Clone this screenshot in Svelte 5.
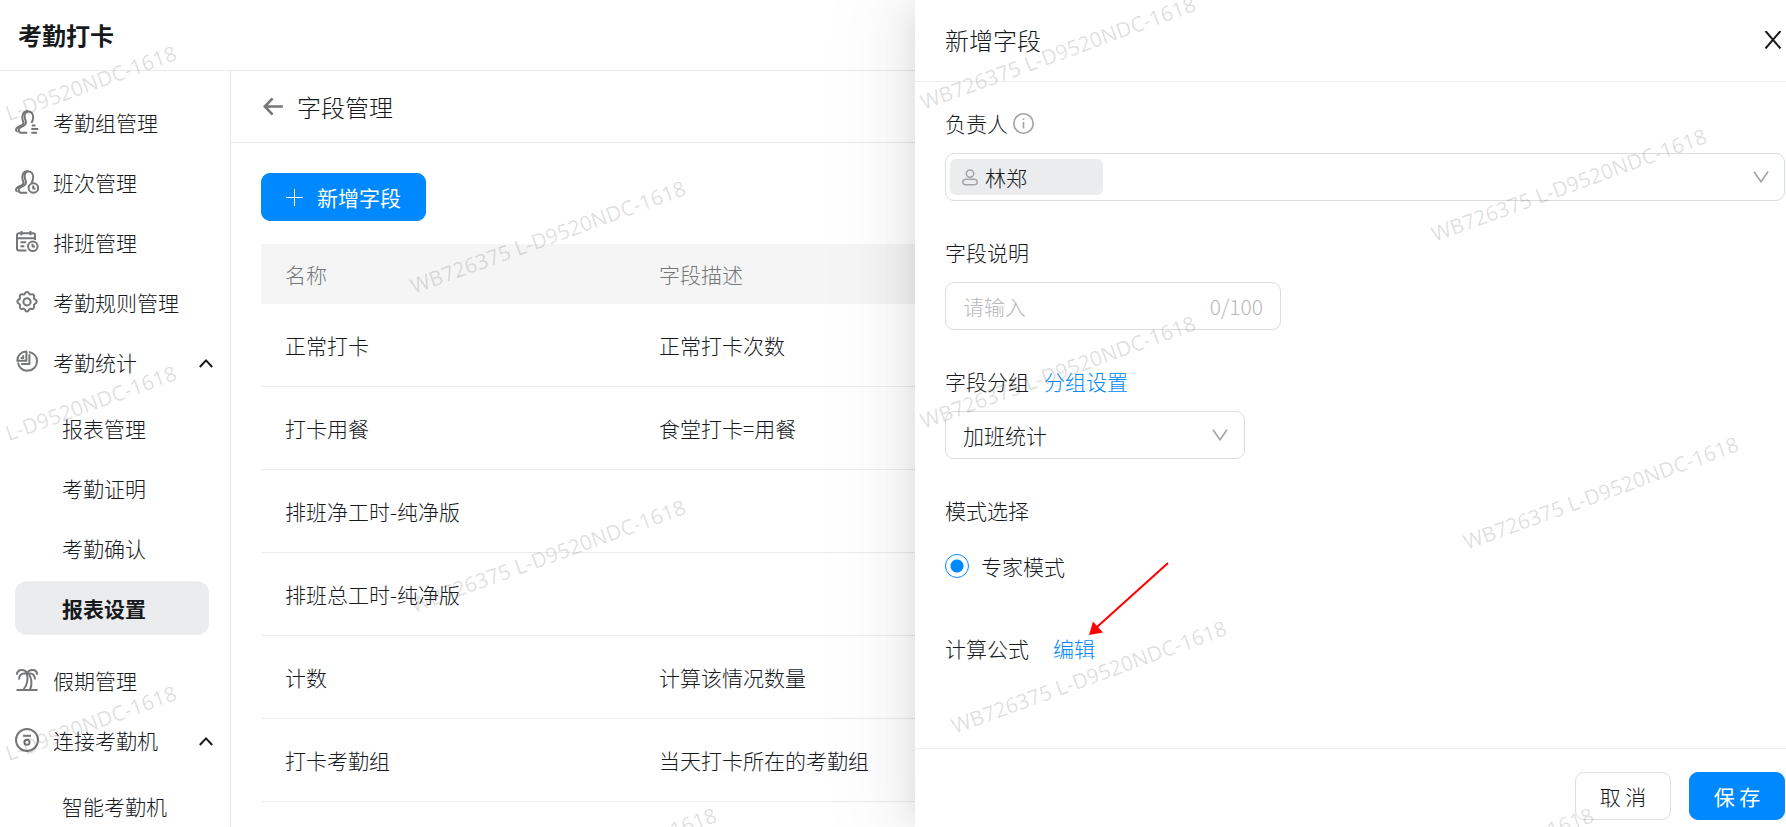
<script>
  const menu = [
    { icon: 'group', label: '考勤组管理' },
    { icon: 'shift', label: '班次管理' },
    { icon: 'calendar', label: '排班管理' },
    { icon: 'gear', label: '考勤规则管理' },
    { icon: 'pie', label: '考勤统计', children: ['报表管理', '考勤证明', '考勤确认', '报表设置'] },
    { icon: 'palm', label: '假期管理' },
    { icon: 'device', label: '连接考勤机', children: ['智能考勤机'] },
  ];
  const active = '报表设置';

  const rows = [
    ['正常打卡', '正常打卡次数'],
    ['打卡用餐', '食堂打卡=用餐'],
    ['排班净工时-纯净版', ''],
    ['排班总工时-纯净版', ''],
    ['计数', '计算该情况数量'],
    ['打卡考勤组', '当天打卡所在的考勤组'],
    ['', ''],
  ];

  // Right-hand end of every watermark line
  const device = 'L-D9520NDC-1618';
  const full = 'WB726375 ' + device;
  const marks = [
    [170, 54, device], [170, 374, device], [170, 694, device],
    [679, 189, full], [679, 508, full], [710, 816, full],
    [1189, 5, full], [1189, 324, full], [1220, 629, full],
    [1700, 137, full], [1732, 445, full], [1587, 816, full],
  ];

  let description = $state('');
</script>

{#snippet icon(name)}
  <svg class="icon" viewBox="0 0 24 24" aria-hidden="true">
    {#if name === 'group' || name === 'shift'}
      <path d="M12.600 1.200C9.800 1.200 7.900 3 7.500 5.600c-.4 2.200 0 4.600 1 6.700.3 1.300-.4 2.200-1.600 2.800L3.200 17c-1.700.9-2.400 1.900-2.200 3.200.1.700.8 1.200 1.600 1.200" />
      <path d="M12.600 1.200c3.500 0 5.700 2.600 5.600 6 0 2.600-.8 4.200-1.900 5.600M12.800 1.200c-2.600.8-3.400 3.400-3.100 6 .2 1.800.9 3 1.200 4.500.4 2-.8 3.200-2.400 4.100l-3 1.600c-1.200.7-1.800 1.400-1.800 2.600 0 1.700.9 2.700 2.500 2.700h6" />
      {#if name === 'group'}
        <path d="M16.800 15.400h3.700M16.300 19h7M16.300 22.700h5.700" />
      {:else}
        <circle cx="18.400" cy="18" r="4.800" />
        <path d="M18.200 15.500v2.900h2.300" />
      {/if}
    {:else if name === 'calendar'}
      <path d="M11.500 20.500H4a2 2 0 0 1-2-2V5.200a2 2 0 0 1 2-2h14a2 2 0 0 1 2 2V10M2 8.300h18M6.500 1v4.200M15.500 1v4.200M5.500 12.300h5.600M5.500 16.300h3.800" />
      <circle cx="17.800" cy="16.300" r="4.800" />
      <path d="M17.500 13.700v2.900h2.500" />
    {:else if name === 'gear'}
      <path d="M12 2.100c1.100 0 1.700.5 2.100 1.500.3.800.9 1.100 1.800.8 1.100-.4 2-.3 2.700.4.700.7.800 1.600.4 2.700-.3.900 0 1.500.8 1.800 1 .4 1.900 1.200 1.900 2.300s-.9 1.900-1.900 2.300c-.8.300-1.100.9-.8 1.800.4 1.100.3 2-.4 2.700-.7.700-1.600.8-2.700.4-.9-.3-1.500 0-1.800.8-.4 1-1 2-2.100 2s-1.700-1-2.100-2c-.3-.8-.9-1.100-1.800-.8-1.100.4-2 .3-2.700-.4-.7-.7-.8-1.600-.4-2.700.3-.9 0-1.500-.8-1.800-1-.4-1.900-1.200-1.900-2.300s.9-1.900 1.900-2.300c.8-.3 1.100-.9.8-1.800-.4-1.100-.3-2 .4-2.700.7-.7 1.600-.8 2.700-.4.900.3 1.500 0 1.800-.8.400-1 1-1.500 2.100-1.500z" />
      <circle cx="12" cy="11.800" r="3.600" />
    {:else if name === 'pie'}
      <path d="M14 2.100c4.700.9 8 4.500 8 9.200a9.500 9.500 0 0 1-9.500 9.500c-5.200 0-9-3.600-9.500-8.300" />
      <path d="M11.400 1.500v9.200H2.300c0-5.200 3.900-9.200 9.100-9.200zM14.400 4.300V14H6.200" />
      <path d="M8.200 5.200v2.700H5.700" />
    {:else if name === 'palm'}
      <path d="M1.800 6.800C1.900 3.800 4 2 6.800 2c2.500 0 4.500 1.200 5.300 3.300C12.900 3.200 15 2 17.400 2c2.800 0 4.800 1.800 4.900 4.800M4.200 11.500c-.5-3.300 1.600-6 5-6h5.600c3.600 0 5.600 2.700 5 6M1.500 22h21" />
      <path d="M11.800 5.500c1.500 5.500.8 11-3.500 16.300M13.800 6c3.200 4.700 3.300 10.500 1.200 15.800" />
    {:else if name === 'device'}
      <circle cx="12" cy="12" r="11" />
      <path d="M8 7.800h8" />
      <circle cx="12" cy="14.200" r="2.500" />
    {/if}
  </svg>
{/snippet}

{#snippet arrowDown()}
  <svg class="down" viewBox="0 0 16 12" aria-hidden="true"><path d="M1 .8l7 10 7-10" /></svg>
{/snippet}

<div class="page">
  <header class="top"><h1>考勤打卡</h1></header>

  <div class="layout">
    <nav class="side">
      {#each menu as item}
        <a class="item" href="#menu">
          {@render icon(item.icon)}
          <span>{item.label}</span>
          {#if item.children}
            <svg class="up" viewBox="0 0 14 12" aria-hidden="true"><path d="M.8 11L7 4.400l6.200 6.600" /></svg>
          {/if}
        </a>
        {#if item.children}
          <div class="sub">
            {#each item.children as child}
              <a class="item child" class:active={child === active} href="#menu">{child}</a>
            {/each}
          </div>
        {/if}
      {/each}
    </nav>

    <main>
      <div class="crumb">
        <button class="plain" aria-label="返回">
          <svg class="back" viewBox="0 0 20 20" aria-hidden="true"><path d="M9.600 1.300L1.800 9.500l7.800 8.200M2 9.500h17.800" /></svg>
        </button>
        <h2>字段管理</h2>
      </div>
      <div class="content">
        <button class="btn primary add">
          <svg class="plus" viewBox="0 0 17 17" aria-hidden="true"><path d="M8.500 0v17M0 8.500h17" /></svg>
          新增字段
        </button>
        <table>
          <thead>
            <tr><th class="name">名称</th><th>字段描述</th></tr>
          </thead>
          <tbody>
            {#each rows as row}
              <tr><td>{row[0]}</td><td>{row[1]}</td></tr>
            {/each}
          </tbody>
        </table>
      </div>
    </main>
  </div>

  <aside class="drawer">
    <div class="drawer-head">
      <h2>新增字段</h2>
      <button class="plain" aria-label="关闭">
        <svg class="close" viewBox="0 0 18 18" aria-hidden="true"><path d="M1.500 0L16.500 17.500M16.500 0L1.500 17.500" /></svg>
      </button>
    </div>

    <form class="drawer-body">
      <div class="field">
        <div class="label" id="owner-label">
          负责人
          <svg class="info" viewBox="0 0 21 21" aria-hidden="true">
            <circle cx="10.500" cy="10.500" r="9.700" />
            <path d="M10.500 9v6.500M10.500 5.400v1.600" />
          </svg>
        </div>
        <button type="button" class="box owner" aria-haspopup="listbox" aria-labelledby="owner-label">
          <span class="tag">
            <svg class="person" viewBox="0 0 16 17" aria-hidden="true">
              <circle cx="8" cy="4.600" r="3.700" />
              <rect x=".8" y="10.200" width="14.400" height="5.600" rx="3.500" ry="2.800" />
            </svg>
            林郑
          </span>
          {@render arrowDown()}
        </button>
      </div>

      <div class="field">
        <label class="label" for="description">字段说明</label>
        <div class="box text">
          <input id="description" type="text" maxlength="100" placeholder="请输入" bind:value={description} />
          <span class="count">{description.length}/100</span>
        </div>
      </div>

      <div class="field">
        <div class="label split">
          <label for="group">字段分组</label>
          <a href="#group">分组设置</a>
        </div>
        <div class="box pick">
          <select id="group"><option>加班统计</option></select>
          {@render arrowDown()}
        </div>
      </div>

      <div class="field">
        <div class="label">模式选择</div>
        <label class="mode"><input type="radio" name="mode" checked />专家模式</label>
      </div>

      <div class="label formula">
        <span>计算公式</span>
        <a href="#formula">编辑</a>
        <svg class="pointer" viewBox="0 0 80 74" aria-hidden="true">
          <path class="line" d="M79 1L8 65" />
          <path class="head" d="M0 73L4 59.500 14 70.500z" />
        </svg>
      </div>
    </form>

    <footer>
      <button class="btn">取 消</button>
      <button class="btn primary">保 存</button>
    </footer>
  </aside>

  <svg class="marks" aria-hidden="true">
    {#each marks as [x, y, text]}
      <text transform="translate({x} {y}) rotate(-20)" x="6" y="8">{text}</text>
    {/each}
  </svg>
</div>

<style>
  :global(body) {
    margin: 0;
  }
  .page {
    position: relative;
    display: flex;
    flex-direction: column;
    height: 100vh;
    overflow: hidden;
    background: #fff;
    color: #171a1d;
    font-family: 'Noto Sans CJK SC', 'Noto Sans', sans-serif;
    font-size: 21px;
    font-weight: 300;
    line-height: 32px;
  }
  h1,
  h2 {
    margin: 0;
    font-size: 24px;
    line-height: 36px;
    font-weight: 300;
  }
  a {
    color: #0089ff;
    text-decoration: none;
  }
  button,
  input,
  select {
    font: inherit;
    color: inherit;
  }
  svg {
    flex: none;
    fill: none;
    stroke: currentColor;
  }
  .plain {
    display: flex;
    padding: 0;
    border: 0;
    background: none;
  }

  .top {
    padding: 17px 18px;
    border-bottom: 1px solid #e9e9ea;
  }
  .top h1 {
    font-weight: 700;
  }
  .layout {
    display: flex;
    flex: 1;
    min-height: 0;
  }
  .side {
    box-sizing: border-box;
    flex: none;
    width: 231px;
    padding: 24px 21px 0 15px;
    border-right: 1px solid #e9e9ea;
  }
  .item {
    display: flex;
    align-items: center;
    gap: 14px;
    height: 54px;
    margin-bottom: 6px;
    border-radius: 12px;
    color: inherit;
  }
  .item span {
    flex: 1;
  }
  .icon {
    width: 24px;
    height: 24px;
    color: #747677;
    stroke-width: 2;
    stroke-linejoin: round;
  }
  .up {
    width: 14px;
    height: 12px;
    margin-right: -4px;
    stroke-width: 2;
  }
  .sub {
    padding: 6px 0;
    margin-bottom: 6px;
  }
  .child {
    padding-left: 47px;
  }
  .active {
    background: #ebecee;
    font-weight: 700;
  }

  main {
    flex: 1;
    min-width: 0;
  }
  .crumb {
    display: flex;
    align-items: center;
    gap: 14px;
    padding: 18px 32px 17px;
    border-bottom: 1px solid #e9e9ea;
  }
  .back {
    width: 20px;
    height: 20px;
    color: #747677;
    stroke-width: 2.6;
  }
  .content {
    padding: 30px;
  }
  .btn {
    box-sizing: border-box;
    display: flex;
    align-items: center;
    justify-content: center;
    min-width: 96px;
    height: 48px;
    padding: 0 20px;
    border: 1px solid #dcdddd;
    border-radius: 9px;
    background: #fff;
    white-space: nowrap;
  }
  .primary {
    border-color: #0089ff;
    background: #0089ff;
    color: #fff;
    font-weight: 400;
  }
  .add {
    gap: 14px;
    padding: 0 24px;
    margin-bottom: 23px;
  }
  .plus {
    width: 17px;
    height: 17px;
  }
  table {
    width: 100%;
    border-collapse: separate;
    border-spacing: 0;
    table-layout: fixed;
  }
  th,
  td {
    box-sizing: border-box;
    padding: 0 24px;
    text-align: left;
    font-weight: inherit;
  }
  th {
    height: 60px;
    background: #f5f5f5;
    color: #747677;
  }
  .name {
    width: 374px;
  }
  td {
    height: 83px;
    border-bottom: 1px solid #ececed;
  }

  .drawer {
    position: absolute;
    inset: 0 0 0 auto;
    display: flex;
    flex-direction: column;
    width: 871px;
    max-width: 100%;
    background: #fff;
    box-shadow:
      -9px 0 24px -12px rgba(0, 0, 0, 0.08),
      -14px 0 42px rgba(0, 0, 0, 0.05),
      -18px 0 72px 24px rgba(0, 0, 0, 0.03);
  }
  .drawer-head {
    display: flex;
    align-items: center;
    justify-content: space-between;
    padding: 22px 4px 23px 30px;
    border-bottom: 1px solid #ececed;
  }
  .close {
    width: 18px;
    height: 18px;
    stroke-width: 2;
  }
  .drawer-body {
    flex: 1;
    min-height: 0;
    padding: 25px 1px 0 30px;
  }
  .field {
    display: flex;
    flex-direction: column;
    gap: 14px;
    margin-bottom: 35px;
  }
  .label {
    display: flex;
    align-items: center;
    gap: 5px;
  }
  .split {
    gap: 15px;
  }
  .info {
    width: 21px;
    height: 21px;
    color: #a2a3a5;
    stroke-width: 1.6;
  }
  .box {
    box-sizing: border-box;
    display: flex;
    align-items: center;
    height: 48px;
    border: 1px solid #dcdddd;
    border-radius: 9px;
    background: #fff;
  }
  .down {
    width: 16px;
    height: 12px;
    color: #a2a3a5;
    stroke-width: 1.6;
    pointer-events: none;
  }
  .owner {
    justify-content: space-between;
    padding: 0 15px 0 4px;
  }
  .tag {
    box-sizing: border-box;
    display: flex;
    align-items: center;
    gap: 7px;
    width: 153px;
    height: 36px;
    padding: 0 12px;
    border-radius: 6px;
    background: #ebecee;
  }
  .person {
    width: 16px;
    height: 17px;
    color: #a2a3a5;
    stroke-width: 1.5;
  }
  .text {
    width: 336px;
    padding: 0 17px;
  }
  .text input {
    flex: 1;
    min-width: 0;
    padding: 0;
    border: 0;
    outline: 0;
    background: none;
  }
  .text input::placeholder,
  .count {
    color: #b9babb;
    opacity: 1;
  }
  .pick {
    position: relative;
    width: 300px;
  }
  .pick select {
    width: 100%;
    height: 100%;
    padding: 0 48px 0 17px;
    border: 0;
    border-radius: 9px;
    outline: 0;
    background: none;
    appearance: none;
  }
  .pick .down {
    position: absolute;
    right: 16px;
  }
  .mode {
    display: flex;
    align-items: center;
    gap: 12px;
    height: 52px;
  }
  .mode input {
    appearance: none;
    box-sizing: border-box;
    width: 24px;
    height: 24px;
    margin: 0;
    border: 1px solid #0089ff;
    border-radius: 50%;
    background: radial-gradient(circle, #0089ff 0 6px, #fff 7px);
  }
  .formula {
    position: relative;
    gap: 24px;
    padding-top: 5px;
  }
  .pointer {
    position: absolute;
    left: 144px;
    bottom: 28px;
    width: 80px;
    height: 74px;
  }
  .line {
    stroke: #f00;
    stroke-width: 2;
  }
  .head {
    fill: #f00;
    stroke: none;
  }
  footer {
    display: flex;
    justify-content: flex-end;
    gap: 18px;
    padding: 23px 1px 7px;
    border-top: 1px solid #ececed;
  }

  .marks {
    position: absolute;
    inset: 0;
    width: 100%;
    height: 100%;
    pointer-events: none;
  }
  .marks text {
    fill: rgba(0, 0, 0, 0.13);
    stroke: none;
    text-anchor: end;
    font-family: 'Noto Sans', sans-serif;
    font-weight: 400;
  }
</style>
